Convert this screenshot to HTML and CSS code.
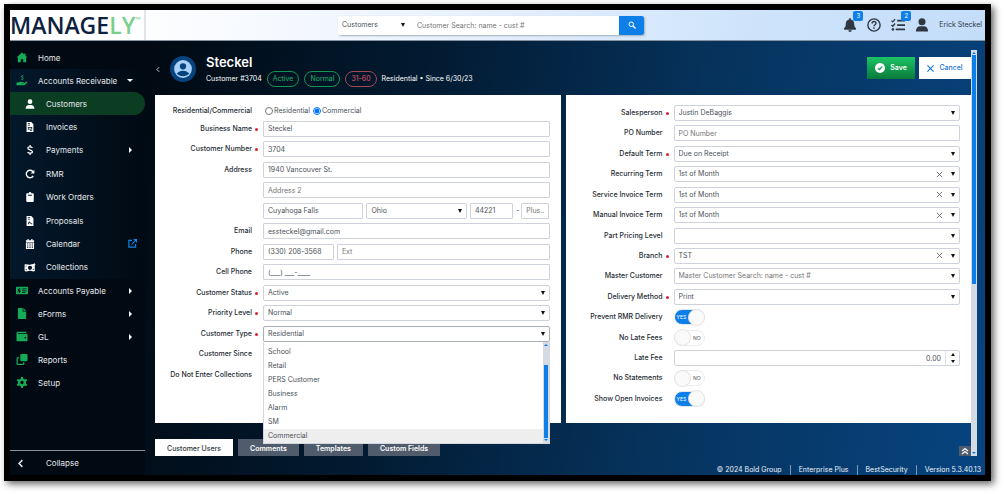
FILE: index.html
```html
<!DOCTYPE html>
<html lang="en">
<head>
<meta charset="utf-8">
<meta name="viewport" content="width=device-width, initial-scale=1">
<title>Managely - Steckel</title>
<link rel="stylesheet" href="styles.css">
</head>
<body>
<div class="frame">
  <header class="topbar">
    <a class="logo" href="#"><span class="logo-main">MANAGE</span><span class="logo-accent">LY</span><span class="logo-tm">™</span></a>
    <form class="search">
      <span class="select search-scope"><select aria-label="Search in"><option>Customers</option></select></span>
      <input class="search-text" type="text" aria-label="Customer search" placeholder="Customer Search: name - cust #">
      <button class="search-go" type="button" aria-label="Search"><svg viewBox="0 0 16 16"><circle cx="6.5" cy="6.5" r="4.5" fill="none" stroke="currentColor" stroke-width="2"/><path d="M10 10l5 5" stroke="currentColor" stroke-width="2.6"/></svg></button>
    </form>
    <div class="tools">
      <button class="tool" type="button" aria-label="Notifications"><svg viewBox="0 0 16 16"><path fill="currentColor" d="M8 0a1 1 0 0 0-1 1v.7A5 5 0 0 0 3.200 6.500C3.200 9.500 2.300 10.700 1.200 11.800c-.5.6-.2 1.500.8 1.500h12c1 0 1.300-.9.8-1.500-1.100-1.100-2-2.300-2-5.300A5 5 0 0 0 9 1.700V1a1 1 0 0 0-1-1zM6 14a2 2 0 0 0 4 0z"/></svg><span class="count">3</span></button>
      <button class="tool" type="button" aria-label="Help"><svg viewBox="0 0 16 16" fill="none" stroke="currentColor"><circle cx="8" cy="8" r="7" stroke-width="1.600"/><path stroke-width="1.600" d="M5.800 6.200c.1-2.900 4.600-2.800 4.500-.1C10.300 7.700 8 7.700 8 9.400"/><circle cx="8" cy="11.500" r=".6"/></svg></button>
      <button class="tool" type="button" aria-label="Tasks"><svg viewBox="0 0 16 16" fill="none" stroke="currentColor"><path stroke-width="1.500" d="M.6 3l1.400 1.400L4.700 1.300M.6 8L2 9.400l2.700-3.100"/><path stroke-width="2" d="M7 3h9M7 8h9M5.500 13H16"/><circle cx="2.200" cy="13" r="1.100" fill="currentColor"/></svg><span class="count">2</span></button>
      <button class="tool" type="button" aria-label="Account"><svg viewBox="0 0 16 16" fill="currentColor"><circle cx="8" cy="4.200" r="4"/><path d="M1 15.500C1 11.500 3.300 9.500 6 9.500h4c2.700 0 5 2 5 6z"/></svg></button>
      <span class="user-name">Erick Steckel</span>
    </div>
  </header>

  <div class="body">
    <nav class="sidebar" aria-label="Main">
      <ul class="menu">
        <li><a class="item" href="#"><svg viewBox="0 0 16 16"><path fill="currentColor" d="M8 .7L0 8h2v7h4.300v-4.500h3.400V15H14V8h2l-2.800-2.600V2h-2v1.600z"/></svg>Home</a></li>
        <li class="group-open"><a class="item" href="#"><svg viewBox="0 0 16 16"><path fill="currentColor" d="M0 11h2.300C4 9.500 5.500 9.600 7 10h3c1 0 1 1.500 0 1.500H7.500v.6h3.300L14 9.800c1.200-.8 2.400.5 1.400 1.500L12 14.500c-.5.4-1 .5-1.600.5H0z"/><path fill="none" stroke="currentColor" stroke-width="1.200" d="M10 1.800C8.500 1 7 1.400 7 2.600s3 1 3 2.300S8 6.600 6.700 5.800M8.500 0v1.500M8.500 6v1.500"/></svg>Accounts Receivable<span class="caret down"></span></a>
          <ul class="submenu">
            <li><a class="item active" href="#"><svg viewBox="0 0 16 16" fill="currentColor"><circle cx="8" cy="4.200" r="3.800"/><path d="M1 15.500C1 11.500 3.300 9.500 6 9.500h4c2.700 0 5 2 5 6z"/></svg>Customers</a></li>
            <li><a class="item" href="#"><svg viewBox="0 0 16 16" fill-rule="evenodd"><path fill="currentColor" d="M2.500 0H10l3.500 3.500V16h-11zM4.500 2v1.200H8V2zm0 2.400v1.200H8V4.400zM4.500 8v4h7V8zm1.200 1.200h4.600v1.600H5.700zM8 13v1.200h3.500V13z"/></svg>Invoices</a></li>
            <li><a class="item" href="#"><svg viewBox="0 0 16 16"><path fill="none" stroke="currentColor" stroke-width="2" d="M12 4.400C9.500 2.500 4.500 2.600 4.500 5.200S12 7.800 12 10.800 6.500 13.800 4 11.700M8.200 0v3M8.200 13v3"/></svg>Payments<span class="caret right"></span></a></li>
            <li><a class="item" href="#"><svg viewBox="0 0 16 16"><path fill="none" stroke="currentColor" stroke-width="2.200" d="M13 4.500A6 6 0 1 0 13.200 11"/><path fill="currentColor" d="M15 1v6H9z"/></svg>RMR</a></li>
            <li><a class="item" href="#"><svg viewBox="0 0 16 16" fill-rule="evenodd"><path fill="currentColor" d="M3.500 2H6a2 2 0 0 1 4 0h2.500c.8 0 1.500.7 1.500 1.500v11c0 .8-.7 1.500-1.500 1.500h-9C2.700 16 2 15.300 2 14.500v-11C2 2.700 2.700 2 3.500 2zM5 4.500v1.300h6V4.500z"/></svg>Work Orders</a></li>
            <li><a class="item" href="#"><svg viewBox="0 0 16 16" fill-rule="evenodd"><path fill="currentColor" d="M2.500 0H10l3.500 3.500V16h-11zM4.500 2v1.200H8V2zm0 2.400v1.200H8V4.400zM4.300 13h1.400l1.200-2.500 1 1.800 1-.8.8 1.500h2v-1.200h-1.300L9 10l-.9.600L7.300 8.600H6.200z"/></svg>Proposals</a></li>
            <li><a class="item" href="#"><svg viewBox="0 0 16 16" fill-rule="evenodd"><path fill="currentColor" d="M4 0h2v2h4V0h2v2h2.500v3h-13V2H4zM1.500 6h13v10h-13zM3.300 7.300v1.600h2V7.300zm3.700 0v1.600h2V7.300zm3.700 0v1.600h2V7.300zM3.300 10.300v1.600h2v-1.600zm3.700 0v1.600h2v-1.600zm3.700 0v1.600h2v-1.600zM3.300 13v1.400h2V13zM7 13v1.400h2V13zm3.700 0v1.400h2V13z"/></svg>Calendar<svg class="popout" viewBox="0 0 16 16" fill="none" stroke="currentColor" stroke-width="2"><path d="M7 2.500H1.500v12h12V9M10 1h5v5M15 1L6.500 9.500"/></svg></a></li>
            <li><a class="item" href="#"><svg class="wide" viewBox="0 0 20 16" fill-rule="evenodd"><path fill="currentColor" d="M1 3c3-1.500 6 1 9 .5 2-.4 4-1.500 6-1.500l1-2 1 2 2 .8-2 .8V14c-3 1.500-6-1-9-.5S4 15.500 1 14zm1.800 2v2.200L5 5zM10 5a3.500 3.500 0 1 0 0 7 3.500 3.500 0 0 0 0-7zm6.200 7V9.800L14 12zM2.800 10v2.600L5.400 12z"/></svg>Collections</a></li>
          </ul>
        </li>
        <li><a class="item" href="#"><svg viewBox="0 0 18 16" fill-rule="evenodd"><path fill="currentColor" d="M1 2.500h16c.6 0 1 .4 1 1v9c0 .6-.4 1-1 1H1c-.6 0-1-.4-1-1v-9c0-.6.4-1 1-1zM9 5v1.300h7V5zm0 3v1.200h7V8zm0 2.600v1.200h5v-1.200zM4.300 4.500v.8C2 5.700 2 8 4 8.400c1.500.3 1.200 1.200 0 1.100l-1.500-.5-.4 1.200 2.200.6v.9h1.200v-.9c2.400-.5 2.200-3 .2-3.500-1.400-.3-1.200-1.200 0-1l1 .2.300-1.100-1.500-.3v-.6z"/></svg>Accounts Payable<span class="caret right"></span></a></li>
        <li><a class="item" href="#"><svg viewBox="0 0 16 16"><path fill="currentColor" d="M3.500 0H9v5h5v9.500c0 .8-.7 1.500-1.500 1.500h-9C2.700 16 2 15.300 2 14.500v-13C2 .7 2.700 0 3.500 0zM10 0l4 4h-4z"/></svg>eForms<span class="caret right"></span></a></li>
        <li><a class="item" href="#"><svg viewBox="0 0 16 16" fill-rule="evenodd"><path fill="currentColor" d="M2 1h12v2H2v1h12.500c.8 0 1.500.6 1.500 1.500v8c0 .8-.7 1.500-1.500 1.500h-13C.7 15 0 14.300 0 13.500V3c0-1.100.9-2 2-2zm10.800 7.500a1.200 1.200 0 1 0 0 2.400 1.200 1.200 0 0 0 0-2.400z"/></svg>GL<span class="caret right"></span></a></li>
        <li><a class="item" href="#"><svg viewBox="0 0 16 16"><rect x="5.500" width="10.500" height="10.500" rx="1.500" fill="currentColor"/><path fill="none" stroke="currentColor" stroke-width="1.800" d="M4 5.500H1.800a.9.900 0 0 0-.9.900v7.800c0 .5.4.9.900.9h7.800c.5 0 .9-.4.9-.9V12"/></svg>Reports</a></li>
        <li><a class="item" href="#"><svg viewBox="0 0 16 16"><circle cx="8" cy="8" r="4.200" fill="none" stroke="currentColor" stroke-width="3.400"/><path fill="none" stroke="currentColor" stroke-width="3" d="M8 0v3M8 13v3M1.100 4l2.600 1.500M12.300 10.500l2.600 1.500M1.100 12l2.600-1.500M12.300 5.500L14.900 4"/></svg>Setup</a></li>
      </ul>
      <button class="collapse" type="button"><svg viewBox="0 0 16 16"><path fill="none" stroke="currentColor" stroke-width="2.600" d="M10.500 2L4.500 8l6 6"/></svg>Collapse</button>
    </nav>

    <main class="workspace">
      <div class="scroller">
        <div class="page">
          <div class="page-head">
            <button class="back" type="button" aria-label="Back"><svg viewBox="0 0 16 16"><path fill="none" stroke="currentColor" stroke-width="2.200" d="M11 2L5 8l6 6"/></svg></button>
            <svg class="avatar" viewBox="0 0 24 24"><circle cx="12" cy="12" r="12" fill="#07437c"/><circle cx="12" cy="12" r="8.200" fill="#a9d2fa"/><circle cx="12" cy="9.500" r="2.900" fill="#07437c"/><path fill="#07437c" d="M6.300 16.200c2.300-3.600 9.100-3.600 11.400 0-2.800 3.400-8.600 3.400-11.400 0z"/></svg>
            <div class="identity">
              <h1>Steckel</h1>
              <div class="meta"><span>Customer #3704</span><span class="pill">Active</span><span class="pill">Normal</span><span class="pill late">31-60</span><span>Residential • Since 6/30/23</span></div>
            </div>
            <button class="btn save" type="button"><svg viewBox="0 0 16 16"><circle cx="8" cy="8" r="8" fill="#fff"/><path fill="none" stroke="#139a4c" stroke-width="2" d="M4.500 8.200L7 10.700l4.500-5"/></svg>Save</button>
            <button class="btn cancel" type="button"><svg viewBox="0 0 16 16"><path fill="none" stroke="currentColor" stroke-width="2.600" d="M1 1l14 14M15 1L1 15"/></svg>Cancel</button>
          </div>

          <div class="panels">
            <form class="panel left">
              <div class="row radios" role="radiogroup" aria-labelledby="rc"><span class="label" id="rc">Residential/Commercial</span><div class="control"><label><input type="radio" name="rc">Residential</label><label><input type="radio" name="rc" checked>Commercial</label></div></div>
              <div class="row req"><label class="label" for="bn">Business Name</label><div class="control"><input id="bn" type="text" value="Steckel"></div></div>
              <div class="row req"><label class="label" for="cn">Customer Number</label><div class="control"><input id="cn" type="text" value="3704"></div></div>
              <div class="row"><label class="label" for="ad">Address</label><div class="control"><input id="ad" type="text" value="1940 Vancouver St."></div></div>
              <div class="row"><span class="label"></span><div class="control"><input type="text" aria-label="Address 2" placeholder="Address 2"></div></div>
              <div class="row"><span class="label"></span><div class="control city"><input type="text" aria-label="City" value="Cuyahoga Falls"><span class="select"><select aria-label="State"><option>Ohio</option></select></span><span class="zip"><input type="text" aria-label="Zip" value="44221">-<input type="text" aria-label="Zip plus four" placeholder="Plus..."></span></div></div>
              <div class="row"><label class="label" for="em">Email</label><div class="control"><input id="em" type="text" value="essteckel@gmail.com"></div></div>
              <div class="row"><label class="label" for="ph">Phone</label><div class="control phone"><input id="ph" type="text" value="(330) 208-3568"><input type="text" aria-label="Extension" placeholder="Ext"></div></div>
              <div class="row"><label class="label" for="cp">Cell Phone</label><div class="control"><input id="cp" type="text" value="(___) ___-____"></div></div>
              <div class="row req"><label class="label" for="cs">Customer Status</label><div class="control"><span class="select"><select id="cs"><option>Active</option></select></span></div></div>
              <div class="row req"><label class="label" for="pl">Priority Level</label><div class="control"><span class="select"><select id="pl"><option>Normal</option></select></span></div></div>
              <div class="row req"><label class="label" for="ct">Customer Type</label><div class="control"><span class="select open"><select id="ct"><option>Residential</option></select></span>
                <div class="dropdown">
                  <ul role="listbox" aria-label="Customer Type options"><li role="option">School</li><li role="option">Retail</li><li role="option">PERS Customer</li><li role="option">Business</li><li role="option">Alarm</li><li role="option">SM</li><li role="option" class="hover">Commercial</li></ul>
                  <div class="bar list-bar"><i class="up"></i><b></b><i class="down"></i></div>
                </div></div></div>
              <div class="row"><span class="label">Customer Since</span></div>
              <div class="row"><span class="label">Do Not Enter Collections</span></div>
            </form>

            <form class="panel right">
              <div class="row req"><label class="label" for="sp">Salesperson</label><div class="control"><span class="select"><select id="sp"><option>Justin DeBaggis</option></select></span></div></div>
              <div class="row"><label class="label" for="po">PO Number</label><div class="control"><input id="po" type="text" placeholder="PO Number"></div></div>
              <div class="row req"><label class="label" for="dt">Default Term</label><div class="control"><span class="select"><select id="dt"><option>Due on Receipt</option></select></span></div></div>
              <div class="row"><label class="label" for="rt">Recurring Term</label><div class="control"><span class="select"><select id="rt"><option>1st of Month</option></select><button class="clear" type="button" aria-label="Clear"><svg viewBox="0 0 8 8"><path d="M1 1l6 6M7 1L1 7"/></svg></button></span></div></div>
              <div class="row"><label class="label" for="si">Service Invoice Term</label><div class="control"><span class="select"><select id="si"><option>1st of Month</option></select><button class="clear" type="button" aria-label="Clear"><svg viewBox="0 0 8 8"><path d="M1 1l6 6M7 1L1 7"/></svg></button></span></div></div>
              <div class="row"><label class="label" for="mi">Manual Invoice Term</label><div class="control"><span class="select"><select id="mi"><option>1st of Month</option></select><button class="clear" type="button" aria-label="Clear"><svg viewBox="0 0 8 8"><path d="M1 1l6 6M7 1L1 7"/></svg></button></span></div></div>
              <div class="row"><label class="label" for="pp">Part Pricing Level</label><div class="control"><span class="select"><select id="pp"><option></option></select></span></div></div>
              <div class="row req"><label class="label" for="br">Branch</label><div class="control"><span class="select"><select id="br"><option>TST</option></select><button class="clear" type="button" aria-label="Clear"><svg viewBox="0 0 8 8"><path d="M1 1l6 6M7 1L1 7"/></svg></button></span></div></div>
              <div class="row"><label class="label" for="mc">Master Customer</label><div class="control"><span class="select muted"><select id="mc"><option>Master Customer Search: name - cust #</option></select></span></div></div>
              <div class="row req"><label class="label" for="dm">Delivery Method</label><div class="control"><span class="select"><select id="dm"><option>Print</option></select></span></div></div>
              <div class="row"><label class="label" for="pr">Prevent RMR Delivery</label><div class="control"><span class="switch"><input id="pr" type="checkbox" checked><span>YES</span></span></div></div>
              <div class="row"><label class="label" for="nl">No Late Fees</label><div class="control"><span class="switch"><input id="nl" type="checkbox"><span>NO</span></span></div></div>
              <div class="row"><label class="label" for="lf">Late Fee</label><div class="control number"><input id="lf" type="text" value="0.00"><span class="spin"><button type="button" aria-label="Increase"><i class="up"></i></button><button type="button" aria-label="Decrease"><i class="down"></i></button></span></div></div>
              <div class="row"><label class="label" for="ns">No Statements</label><div class="control"><span class="switch"><input id="ns" type="checkbox"><span>NO</span></span></div></div>
              <div class="row"><label class="label" for="so">Show Open Invoices</label><div class="control"><span class="switch"><input id="so" type="checkbox" checked><span>YES</span></span></div></div>
            </form>
          </div>

          <div class="tabs">
            <button class="tab current" type="button">Customer Users</button><button class="tab" type="button">Comments</button><button class="tab" type="button">Templates</button><button class="tab" type="button">Custom Fields</button>
            <button class="to-top" type="button" aria-label="Back to top"><svg viewBox="0 0 16 16"><path fill="none" stroke="currentColor" stroke-width="2.400" d="M2 8l6-5 6 5M2 14l6-5 6 5"/></svg></button>
          </div>
        </div>
        <div class="bar page-bar"><i class="up"></i><b></b><i class="down"></i></div>
      </div>
      <footer class="footer"><span>© 2024 Bold Group</span><span>Enterprise Plus</span><span>BestSecurity</span><span>Version 5.3.40.13</span></footer>
    </main>
  </div>
</div>
</body>
</html>
```

FILE: styles.css
```css
* { box-sizing: border-box; }
body {
  margin: 0;
  padding: 4px 13px 13px 4px;
  background: #fff;
  font-family: Inter, "Open Sans", sans-serif;
  font-size: 7px;
  line-height: 10px;
  color: #4b5158;
}
button, input, select { font: inherit; color: inherit; margin: 0; }
button { border: 0; background: none; padding: 0; }
ul { list-style: none; margin: 0; padding: 0; }
a { color: inherit; text-decoration: none; }
svg { display: block; flex: none; overflow: visible; }

.frame {
  display: flex;
  flex-direction: column;
  min-height: calc(100vh - 17px);
  border: 6px solid #000;
  box-shadow: 3px 3px 7px rgba(0, 0, 0, .6);
}

/* Top bar */
.topbar {
  display: flex;
  align-items: center;
  height: 31px;
  background: linear-gradient(100deg, #fff 10%, #eef4fe 40%, #cfe4fb 75%, #c3ddf9);
  border-bottom: 1px solid #8593a3;
}
.logo {
  display: flex;
  align-items: center;
  width: 136px;
  height: 30px;
  background: #fff;
  border-right: 2px solid #e1e4ea;
  font-family: "Open Sans", "Noto Sans", sans-serif;
  font-size: 23px;
  font-weight: 600;
  line-height: 30px;
}
.logo-main { color: #0d2240; }
.logo-accent { color: #79d08a; }
.logo-tm { color: #79d08a; font-size: 7px; line-height: 7px; align-self: flex-start; padding-top: 6px; }
.search {
  display: flex;
  flex: 0 1 306px;
  height: 19px;
  margin-left: 192px;
  background: #fff;
  border-radius: 2px;
  box-shadow: 1px 1px 2px #a4aebb;
}
.search .search-scope { flex: 0 0 72px; }
.search .search-scope select, .search .search-text { border: 0; height: 19px; background: none; }
.search .search-text { flex: 1; min-width: 0; padding: 0 7px; outline: 0; }
.search-go {
  display: grid;
  place-items: center;
  width: 25px;
  background: #0d7fe8;
  color: #fff;
  border-radius: 0 2px 2px 0;
}
.search-go svg { width: 8px; height: 8px; }
.tools { display: flex; align-items: center; gap: 10px; margin-left: auto; padding-right: 3px; color: #2f3742; }
.tool { position: relative; }
.tool svg { width: 14px; height: 14px; }
.count {
  position: absolute;
  top: -7px;
  right: -6px;
  width: 10px;
  border-radius: 2px;
  background: #0d7fe8;
  color: #fff;
  font-size: 6px;
  line-height: 10px;
}

/* Body */
.body { display: flex; flex: 1; background: linear-gradient(100deg, #010911 12%, #021a31 40%, #06335d 68%, #074480); }
.sidebar {
  display: flex;
  flex-direction: column;
  flex: 0 0 135px;
  min-width: 0;
  padding-top: 5px;
  background: #010a13;
  color: #e6e9ec;
  font-size: 8px;
}
.item { display: flex; align-items: center; gap: 10px; height: 23px; padding: 0 6px; white-space: nowrap; }
.item svg { width: 12px; height: 11px; color: #17ab58; }
.group-open { background: linear-gradient(90deg, #03182b, #010a13); }
.submenu { display: grid; grid-auto-rows: 1fr; height: 187px; }
.submenu .item { height: 100%; padding-left: 14px; }
.submenu svg { height: 10px; color: #fff; }
.item .wide { height: 11px; }
.item.active { background: #0a3d22; border-radius: 0 12px 12px 0; }
.item .popout { width: 9px; height: 9px; margin-left: auto; margin-right: 2px; color: #0d86ee; }
.caret { margin-left: auto; margin-right: 7px; border: 0 solid transparent; }
.caret.right { border-width: 3px 0 3px 3px; border-left-color: #fff; }
.caret.down { border-width: 3px 3px 0; border-top-color: #fff; }
.collapse {
  display: flex;
  align-items: center;
  gap: 20px;
  height: 25px;
  margin-top: auto;
  padding-left: 6px;
  border-top: 1px solid #8b9092;
}
.collapse svg { width: 10px; height: 9px; }

.workspace { display: flex; flex-direction: column; flex: 1; min-width: 0; padding: 9px 8px 0 10px; }
.scroller { display: flex; flex: 1; }
.page { display: flex; flex-direction: column; flex: 1; min-width: 0; }
.page-head { display: flex; height: 45px; padding-top: 3px; color: #fff; }
.back { width: 4px; height: 33px; }
.back svg { width: 6px; height: 7px; }
.avatar { width: 26px; height: 26px; margin: 3px 10px 0 11px; }
.identity { flex: 1; }
h1 { margin: 0; font-size: 13px; font-weight: 600; line-height: 18px; }
.meta { display: flex; align-items: center; gap: 5px; white-space: nowrap; }
.pill { padding: 0 5px; border: 1px solid #159552; border-radius: 8px; color: #1fb368; line-height: 14px; }
.pill.late { border-color: #a54856; color: #e05565; }
.btn { display: flex; align-items: center; justify-content: center; height: 22px; margin-top: 4px; }
.save { width: 48px; gap: 5px; background: linear-gradient(#1bc465, #0a7a3a); font-weight: 600; }
.save svg { width: 10px; height: 10px; }
.cancel { width: 52px; gap: 5px; margin-left: 4px; background: #fff; color: #1b74d4; font-weight: 500; }
.cancel svg { width: 7px; height: 7px; }

.panels { display: grid; grid-template-columns: 1fr 1fr; gap: 5px; flex: 1; }
.panel { display: flex; flex-direction: column; justify-content: space-between; background: #fff; padding: 10px 11px 16px 5px; }
.panel.left { padding-bottom: 40px; }
.row { display: grid; grid-template-columns: 92px 1fr; column-gap: 11px; align-items: center; height: 16px; }
.row.radios { height: 11px; }
.label { justify-self: end; color: #252c33; font-weight: 500; white-space: nowrap; }
.req .label { position: relative; }
.req .label::after { content: ""; position: absolute; top: 4px; right: -6px; width: 3px; height: 3px; border-radius: 2px; background: #e0202c; }
.control { position: relative; display: flex; align-items: center; min-width: 0; }
.control input[type="text"], .search-text { width: 100%; min-width: 0; }
.control input[type="text"], .select select {
  height: 16px;
  padding: 0 4px;
  border: 1px solid #cdd2dd;
  border-radius: 1px;
  outline: 0;
  background: #fff;
}
.select select { width: 100%; appearance: none; grid-area: 1 / 1; border-radius: 2px; }
.select { display: grid; flex: 1; min-width: 0; align-items: center; }
.select::after {
  content: "";
  grid-area: 1 / 1;
  justify-self: end;
  margin-right: 5px;
  border: 2px solid transparent;
  border-top: 4px solid #111;
  border-bottom: 0;
  pointer-events: none;
}
.select.open select { border-color: #a8afba; }
.select.muted { color: #757575; }
.clear { grid-area: 1 / 1; justify-self: end; margin-right: 17px; }
.clear svg { width: 7px; height: 7px; stroke: #666; fill: none; }
::placeholder { color: #757575; opacity: 1; }
.radios .control { gap: 1px; }
.radios label { display: flex; align-items: center; gap: 1px; }
.radios input { width: 8px; height: 8px; margin-left: 2px; }
.city { display: grid; grid-template-columns: 101fr 101fr 80fr; gap: 3px; }
.zip { display: grid; grid-template-columns: 43fr 2px 28fr; gap: 3px; align-items: center; }
.phone { display: grid; grid-template-columns: 1fr 3fr; gap: 3px; }

.dropdown {
  position: absolute;
  z-index: 2;
  top: 16px;
  left: 0;
  right: 0;
  display: flex;
  background: #fff;
  border: 1px solid #d4d8de;
  border-top: 0;
}
.dropdown ul { flex: 1; padding-top: 3px; }
.dropdown li { padding-left: 4px; line-height: 14px; height: 14px; }
.dropdown .hover { background: #eee; }
.bar { display: flex; flex-direction: column; align-items: center; gap: 1px; padding: 2px 0; background: #d5dbe3; }
.bar b { width: 4px; background: #0d7fe8; }
.up, .down { display: block; border: 2px solid transparent; }
.up { border-top: 0; border-bottom-color: #0d7fe8; }
.down { border-bottom: 0; border-top-color: #0d7fe8; }
.list-bar { width: 6px; }
.list-bar b { flex: 1; margin-top: 18px; }
.page-bar { width: 6px; }
.page-bar b { flex: 0 0 57%; }
.page-bar .down { margin-top: auto; }

.switch { display: grid; align-items: center; font-size: 5px; color: #555; }
.switch input { grid-area: 1 / 1; display: flex; align-items: center; appearance: none; width: 31px; height: 16px; border: 1px solid #ececec; border-radius: 8px; background: #fff; }
.switch input::before { content: ""; flex: none; width: 15px; height: 15px; margin: 0 -1px; border: 1px solid #e2e2e2; border-radius: 50%; background: #fafafa; }
.switch span { grid-area: 1 / 1; justify-self: end; margin-right: 4px; pointer-events: none; }
.switch input:checked { justify-content: flex-end; border-color: #dfe6ee; background: linear-gradient(90deg, #0d7fe8 70%, #fff 70%); }
.switch input:checked + span { justify-self: start; margin-left: 3px; color: #fff; }
.number input[type="text"] { text-align: right; padding-right: 18px; border-radius: 2px; }
.spin { position: absolute; right: 1px; width: 14px; height: 14px; display: grid; place-items: center; border-left: 1px solid #dde1e7; }
.spin .up { border-bottom: 3px solid #111; }
.spin .down { border-top: 3px solid #111; }

.tabs { display: flex; gap: 5px; align-items: flex-start; padding-top: 16px; }
.tab { height: 17px; padding: 3px 12px 0; background: #505b6b; color: #fff; font-weight: 600; }
.tab.current { background: #fff; color: #303840; font-weight: 500; }
.to-top { display: grid; place-items: center; align-self: flex-end; width: 12px; height: 10px; margin-left: auto; background: #505b6b; color: #fff; }
.to-top svg { width: 8px; height: 8px; }

.footer { display: flex; justify-content: flex-end; height: 19px; padding-top: 9px; margin-right: -4px; color: #eef3f8; }
.footer span + span { margin-left: 8px; padding-left: 8px; border-left: 1px solid #7f97b3; }
```
